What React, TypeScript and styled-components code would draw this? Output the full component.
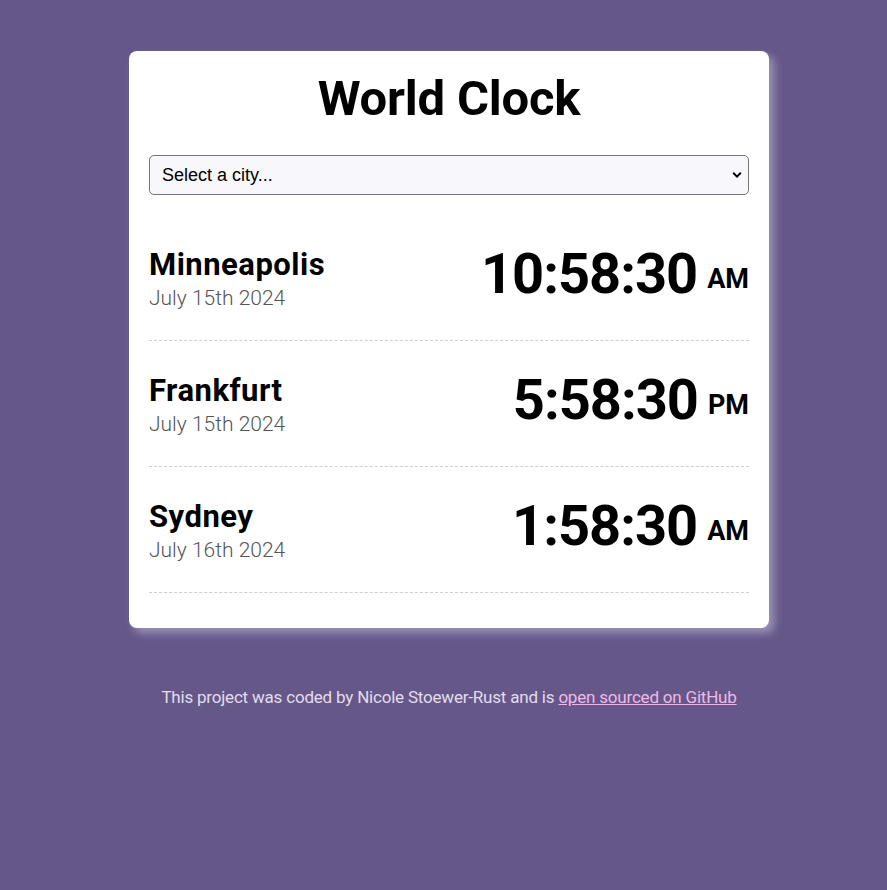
import React from "react";
import styled, { createGlobalStyle } from "styled-components";

const Global = createGlobalStyle`
  html, body { margin: 0; padding: 0; }
  body {
    background: #655889;
    font-family: Roboto, "Liberation Sans", sans-serif;
  }
`;

const Page = styled.div`
  width: 640px;
  margin: 51px 0 0 129px;
`;

const Card = styled.main`
  background: #ffffff;
  border-radius: 8px;
  padding: 20px 20px 35px;
  box-shadow: 5px 5px 8px rgba(205, 195, 225, 0.55);
`;

const Title = styled.h1`
  margin: 0;
  text-align: center;
  font-size: 49px;
  font-weight: 700;
  letter-spacing: -0.2px;
  line-height: 56px;
  color: #000;
`;

const SelectWrap = styled.div`
  position: relative;
  margin-top: 28px;
`;

const Select = styled.select`
  appearance: none;
  width: 100%;
  height: 40px;
  box-sizing: border-box;
  border: 1px solid #767676;
  border-radius: 5px;
  background: #f8f7fc;
  padding: 0 12px;
  font-family: "Liberation Sans", Arial, sans-serif;
  font-size: 18px;
  color: #000;
`;

const Chevron = styled.svg`
  position: absolute;
  right: 7px;
  top: 16px;
  width: 10px;
  height: 8px;
  pointer-events: none;
`;

const List = styled.div`
  margin-top: 20px;
`;

const Row = styled.div`
  display: flex;
  justify-content: space-between;
  align-items: center;
  height: 125px;
  border-bottom: 1px dashed #cfcfcf;
`;

const Place = styled.div`
  display: flex;
  flex-direction: column;
  margin-top: 4px;
`;

const City = styled.h2`
  margin: 0;
  font-size: 31px;
  font-weight: 700;
  letter-spacing: 0.5px;
  line-height: 36px;
  color: #000;
`;

const DateText = styled.div`
  font-size: 21px;
  font-weight: 300;
  line-height: 28px;
  margin-top: 1px;
  color: #555;
`;

const Time = styled.div`
  font-size: 56px;
  font-weight: 700;
  letter-spacing: -1px;
  line-height: 60px;
  color: #000;
  margin-bottom: 2px;
`;

const Meridiem = styled.span`
  font-size: 27px;
  letter-spacing: 0;
  margin-left: 10px;
  vertical-align: 5px;
`;

const Footer = styled.footer`
  text-align: center;
  margin-top: 59px;
  font-size: 17px;
  color: #e3dcec;
  letter-spacing: -0.2px;
`;

const Link = styled.a`
  color: #f1b7e8;
  text-decoration: underline;
`;

const cities = [
  { name: "Minneapolis", date: "July 15th 2024", time: "10:58:30", ampm: "AM" },
  { name: "Frankfurt", date: "July 15th 2024", time: "5:58:30", ampm: "PM" },
  { name: "Sydney", date: "July 16th 2024", time: "1:58:30", ampm: "AM" },
];

export default function App() {
  return (
    <>
      <Global />
      <Page>
        <Card>
          <Title>World Clock</Title>
          <SelectWrap>
            <Select defaultValue="">
              <option value="">Select a city...</option>
              <option value="tokyo">Tokyo</option>
              <option value="paris">Paris</option>
            </Select>
            <Chevron viewBox="0 0 10 8">
              <path d="M1.2 1.8 L5 5.6 L8.8 1.8" fill="none" stroke="#000" strokeWidth="2" />
            </Chevron>
          </SelectWrap>
          <List>
            {cities.map((c) => (
              <Row key={c.name}>
                <Place>
                  <City>{c.name}</City>
                  <DateText>{c.date}</DateText>
                </Place>
                <Time>
                  {c.time}
                  <Meridiem>{c.ampm}</Meridiem>
                </Time>
              </Row>
            ))}
          </List>
        </Card>
        <Footer>
          This project was coded by Nicole Stoewer-Rust and is{" "}
          <Link href="#">open sourced on GitHub</Link>
        </Footer>
      </Page>
    </>
  );
}
